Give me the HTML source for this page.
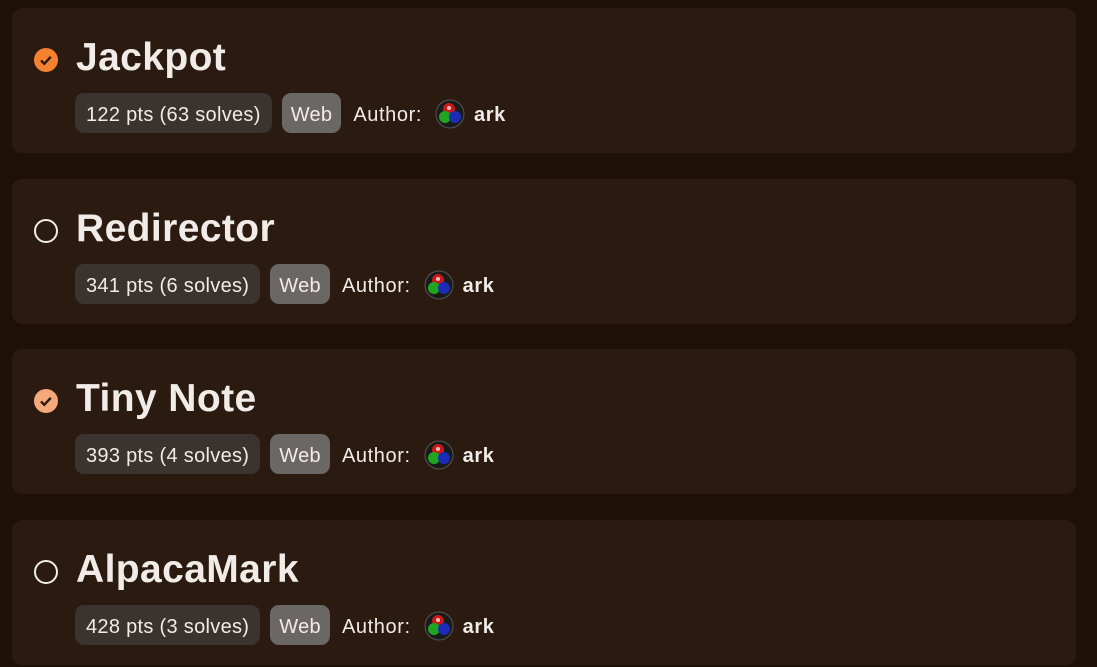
<!DOCTYPE html><html><head><style>
body{margin:0;background:#1f1007;font-family:"Liberation Sans",sans-serif;width:1097px;height:667px;overflow:hidden;position:relative}
.card{position:absolute;left:12px;width:1064px;height:145px;background:#2a1a10;border-radius:10px}
.ic{position:absolute;left:22px;top:40px;width:24px;height:24px;border-radius:50%;box-sizing:border-box}
.ic.o{border:2.5px solid #f2eeea}
.t{position:absolute;left:64px;top:28px;font-size:39px;font-weight:bold;color:#f1ece8;letter-spacing:0.4px}
.row{position:absolute;left:63px;top:85px;display:flex;align-items:center;height:40px;font-size:20px;color:#f1ece8;letter-spacing:0.3px}
.row span{height:40px;line-height:44px}
.p{background:#3a3330;border-radius:9px;padding:0 11px}
.w{background:#6b6765;border-radius:9px;padding:0 9px;margin-left:10px}
.a{margin-left:12px;letter-spacing:0.6px}
.av{width:30px;height:30px;margin-left:13px;margin-top:2px}
.n{font-weight:bold;margin-left:9px;letter-spacing:0.6px}
</style></head><body>
<svg width="0" height="0" style="position:absolute"><defs><symbol id="av" viewBox="0 0 30 30"><circle cx="15" cy="15" r="14" fill="#1a1a1a" stroke="#555" stroke-width="1"/><circle cx="14" cy="10" r="6" fill="#c81818"/><circle cx="10" cy="18" r="6" fill="#1fa51f"/><circle cx="20" cy="18" r="6" fill="#1b2bb5"/><circle cx="14" cy="9" r="2" fill="#fbb"/></symbol></defs></svg>
<div class="card" style="top:8px"><div class="ic" style="background:#f58131"><svg width="24" height="24"><path d="M7 12.5l3.3 3.3 6.5-7" stroke="#2a1a10" stroke-width="2.4" fill="none"/></svg></div><div class="t">Jackpot</div>
<div class="row"><span class="p">122 pts (63 solves)</span><span class="w">Web</span><span class="a">Author:</span><svg class="av"><use href="#av"/></svg><span class="n">ark</span></div></div>
<div class="card" style="top:179px"><div class="ic o"></div><div class="t">Redirector</div>
<div class="row"><span class="p">341 pts (6 solves)</span><span class="w">Web</span><span class="a">Author:</span><svg class="av"><use href="#av"/></svg><span class="n">ark</span></div></div>
<div class="card" style="top:349px"><div class="ic" style="background:#f5a87c"><svg width="24" height="24"><path d="M7 12.5l3.3 3.3 6.5-7" stroke="#2a1a10" stroke-width="2.4" fill="none"/></svg></div><div class="t">Tiny Note</div>
<div class="row"><span class="p">393 pts (4 solves)</span><span class="w">Web</span><span class="a">Author:</span><svg class="av"><use href="#av"/></svg><span class="n">ark</span></div></div>
<div class="card" style="top:520px"><div class="ic o"></div><div class="t">AlpacaMark</div>
<div class="row"><span class="p">428 pts (3 solves)</span><span class="w">Web</span><span class="a">Author:</span><svg class="av"><use href="#av"/></svg><span class="n">ark</span></div></div>
</body></html>
